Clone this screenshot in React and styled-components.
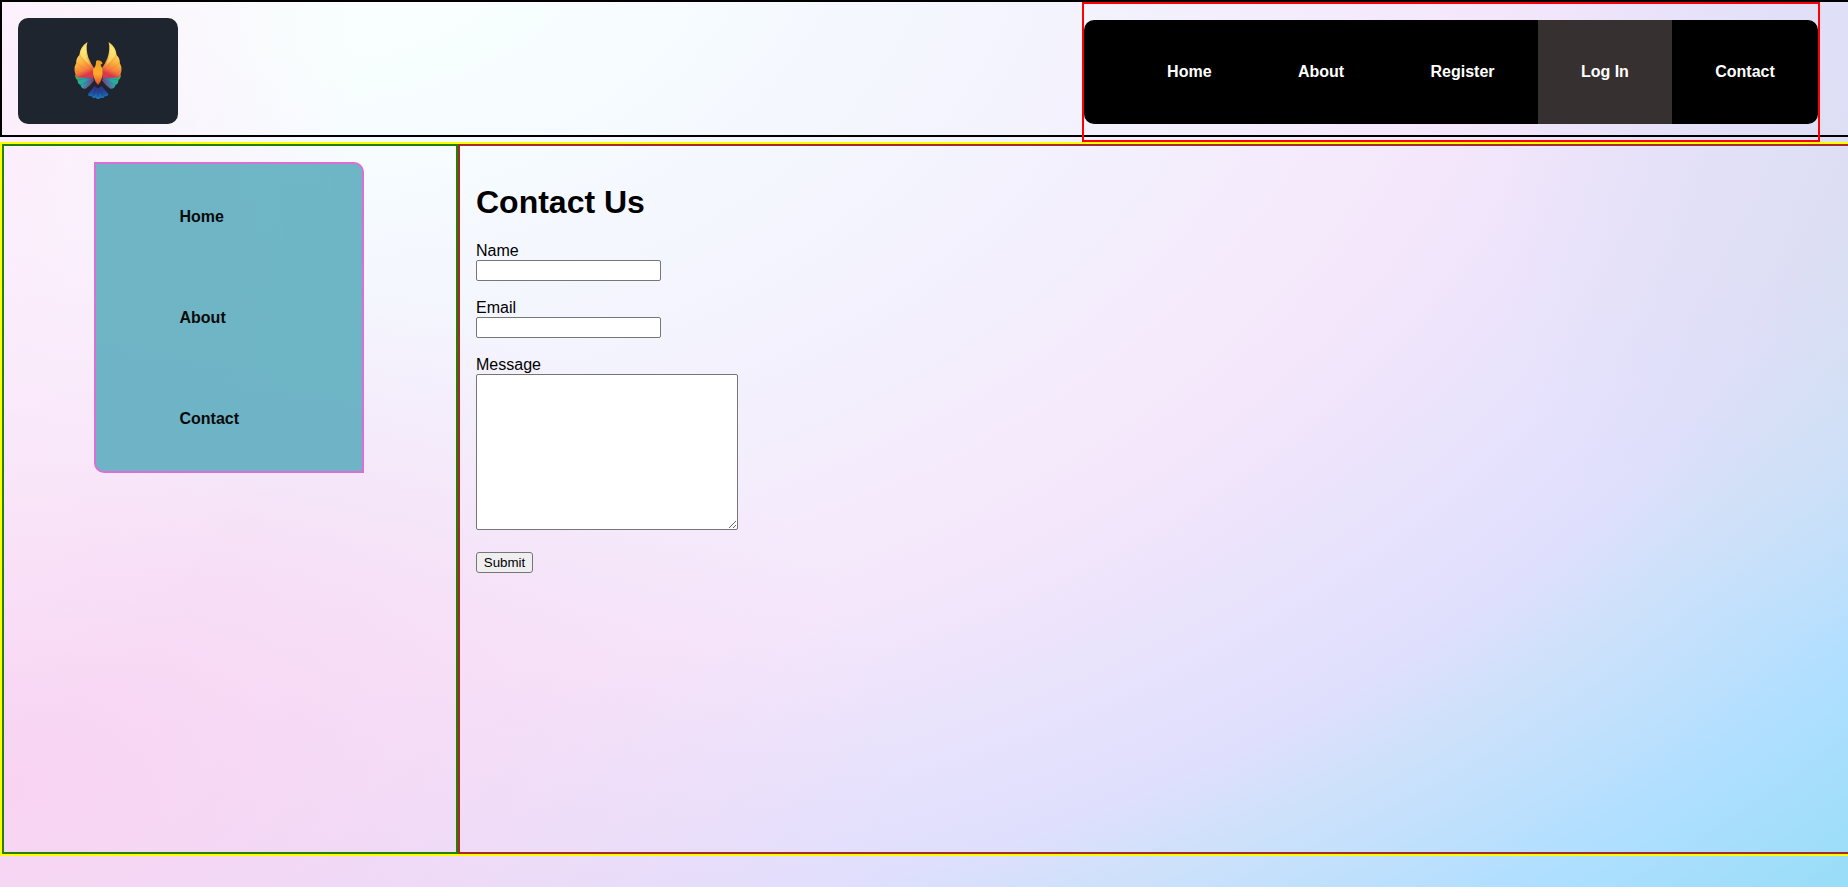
import React from "react";
import styled, { createGlobalStyle } from "styled-components";

const GlobalStyle = createGlobalStyle`
  html, body { height: 100%; }
  body {
    margin: 0;
    overflow: hidden;
    color: #000;
    font-family: "Liberation Sans", Arial, sans-serif;
    font-size: 16px;
    line-height: 18px;
    background:
      radial-gradient(ellipse 420px 600px at -60px 140px, rgba(255, 234, 251, 0.9), rgba(255, 236, 250, 0)),
      radial-gradient(ellipse 380px 420px at 1880px 230px, rgba(220, 222, 238, 0.7), rgba(222, 224, 242, 0)),
      radial-gradient(ellipse 900px 560px at 0px 790px, #f9d4f2, rgba(247, 222, 248, 0)),
      radial-gradient(ellipse 1300px 850px at 300px -100px,
        #f8fffe 0%, #f8fffe 18%, #f5faff 38%, #f3f1fd 66%, #f5e7fb 92%,
        #dfdffd 123%, #cfe1fa 131%, #b0dfff 149%, #97ddf7 167%);
    background-attachment: fixed;
  }
`;

const Header = styled.header`
  display: flex;
  justify-content: space-between;
  align-items: flex-start;
  width: 100%;
  height: 133px;
  border: 2px solid #000;
`;

const LogoLink = styled.a`
  display: flex;
  align-items: center;
  justify-content: center;
  width: 160px;
  height: 106px;
  margin: 16px;
  border-radius: 10px;
  background: #1e252e;
`;

const TopNav = styled.nav`
  box-sizing: border-box;
  width: 738px;
  margin-right: 30px;
  border: 2px solid red;
`;

const TopList = styled.ul`
  display: flex;
  justify-content: flex-end;
  margin: 16px 0;
  padding: 0;
  list-style: none;
  border-radius: 10px;
  background: #000;
  overflow: hidden;
`;

const TopLink = styled.a`
  display: block;
  padding: 43px 43.2px;
  color: #fff;
  font-weight: bold;
  text-decoration: none;
  background: ${(p) => (p.$active ? "#363130" : "transparent")};
`;

const Content = styled.div`
  display: flex;
  width: 100%;
  height: 710px;
  margin-top: 5px;
  border: 2px solid yellow;
`;

const Sidebar = styled.aside`
  box-sizing: border-box;
  flex: none;
  width: 456px;
  padding: 16px 90px;
  border: 2px solid #258000;
`;

const SideList = styled.ul`
  box-sizing: border-box;
  display: flex;
  flex-direction: column;
  gap: 83px;
  width: 270px;
  height: 311px;
  margin: 0;
  padding: 44px 83.5px 42px;
  list-style: none;
  border: 2px solid orchid;
  border-radius: 0 10px 0 10px;
  background: rgba(95, 174, 192, 0.9);
`;

const SideLink = styled.a`
  color: #060a0b;
  font-weight: bold;
  text-decoration: none;
`;

const Main = styled.main`
  flex: 1;
  padding: 16px;
  border: 2px solid brown;
`;

const Title = styled.h1`
  margin: 22px 0 21px;
  font-size: 32px;
  line-height: 37px;
`;

const Form = styled.form`
  display: flex;
  flex-direction: column;
  align-items: flex-start;
  gap: 18px;
`;

const Field = styled.label`
  display: flex;
  flex-direction: column;
`;

const fieldBox = `
  box-sizing: border-box;
  margin: 0;
  font-family: "Liberation Sans", Arial, sans-serif;
  font-size: 13.333px;
`;

const Input = styled.input`
  ${fieldBox}
  width: 185px;
  height: 21px;
  border: 1px solid #767676;
  border-radius: 2px;
`;

const TextArea = styled.textarea`
  ${fieldBox}
  width: 262px;
  height: 156px;
  border: 1px solid #767676;
  border-radius: 2px;
`;

const Submit = styled.button`
  ${fieldBox}
  width: 57px;
  height: 21px;
  margin-top: 4px;
  padding: 0;
  line-height: 15px;
  color: #000;
  border: 1px solid #767676;
  border-radius: 3px;
  background: #efefef;
`;

const LogoSvg = styled.svg`
  display: block;
  width: 54px;
  height: 64px;
  margin: 0 0 2px 2px;
`;

function Wing() {
  return (
    <g>
      <path d="M21 39.5 L3 37 Q3.4 41 5.5 42 Q5.5 46 8.5 47 Q9.5 51.5 14 50.5 Q18 48 22 42.5Z" fill="url(#tip)" />
      <path d="M5.5 42 L21 39.5 M8.5 47 L21.5 41" stroke="#176d91" strokeOpacity=".6" strokeWidth=".6" />
      <path d="M15.4 4 Q8 9 7.4 17 Q4 20 4.2 25 Q1.8 29 2.6 33 Q3.2 37.5 5.5 39.5 L21.5 40 L22 30 Q19 26 16.5 20 Q13.5 11 15.4 4Z" fill="url(#feather)" />
      <path d="M7.6 17 Q13 26 21 33 M4.6 25 Q12 31 21 36 M2.8 33 Q12 36 21 38" stroke="#e0602c" strokeOpacity=".35" strokeWidth=".7" fill="none" />
      <path d="M14 7 Q8.5 12 9 18 Q13 23 18 27 Q12.5 17 14 7Z" fill="#fff08a" fillOpacity=".5" />
    </g>
  );
}

function Logo() {
  return (
    <LogoSvg viewBox="0 0 54 64" aria-label="Phoenix">
      <defs>
        <linearGradient id="feather" x1="0" y1="0" x2=".25" y2="1">
          <stop offset="0" stopColor="#f7c64b" />
          <stop offset=".3" stopColor="#fbe06a" />
          <stop offset=".62" stopColor="#fbb43e" />
          <stop offset=".86" stopColor="#f47c3a" />
          <stop offset="1" stopColor="#d9344d" />
        </linearGradient>
        <linearGradient id="tip" x1="0" y1=".2" x2="1" y2=".5">
          <stop offset="0" stopColor="#35b957" />
          <stop offset=".5" stopColor="#2aa5ae" />
          <stop offset="1" stopColor="#83347e" />
        </linearGradient>
        <linearGradient id="torso" x1="0" y1="0" x2="0" y2="1">
          <stop offset="0" stopColor="#f0a01f" />
          <stop offset=".55" stopColor="#fbac2c" />
          <stop offset="1" stopColor="#ee4527" />
        </linearGradient>
        <linearGradient id="tail" x1="0" y1="0" x2="0" y2="1">
          <stop offset="0" stopColor="#3b2a80" />
          <stop offset=".5" stopColor="#214b9f" />
          <stop offset="1" stopColor="#1a82c5" />
        </linearGradient>
      </defs>
      <Wing />
      <g transform="translate(52 0) scale(-1 1)">
        <Wing />
      </g>
      <path d="M22.5 48 L26 50.5 L29.5 48 L36.5 56 Q36 59 33 58 Q31.5 61 29 59.5 Q26 62.5 23.5 59.5 Q20.5 61 19.5 58 Q16 59 16 56Z" fill="url(#tail)" />
      <path d="M24 51 L21 58 M26 52 V59 M28 51 L31 58" stroke="#172b67" strokeOpacity=".7" strokeWidth=".6" />
      <path d="M24 24 Q24 21.5 27 22.5 Q30 22.5 30.5 26 L28.5 26.5 Q29.5 29 30.5 31 Q31.5 41 26 47 Q20.5 41 21 31 Q24 29 24 24Z" fill="url(#torso)" />
    </LogoSvg>
  );
}

const topLinks = ["Home", "About", "Register", "Log In", "Contact"];
const sideLinks = ["Home", "About", "Contact"];

export default function App() {
  return (
    <>
      <GlobalStyle />
      <Header>
        <LogoLink>
          <Logo />
        </LogoLink>
        <TopNav>
          <TopList>
            {topLinks.map((label) => (
              <li key={label}>
                <TopLink $active={label === "Log In"}>{label}</TopLink>
              </li>
            ))}
          </TopList>
        </TopNav>
      </Header>
      <Content>
        <Sidebar>
          <SideList>
            {sideLinks.map((label) => (
              <li key={label}>
                <SideLink>{label}</SideLink>
              </li>
            ))}
          </SideList>
        </Sidebar>
        <Main>
          <Title>Contact Us</Title>
          <Form onSubmit={(e) => e.preventDefault()}>
            <Field>
              Name
              <Input type="text" />
            </Field>
            <Field>
              Email
              <Input type="email" />
            </Field>
            <Field>
              Message
              <TextArea />
            </Field>
            <Submit type="submit">Submit</Submit>
          </Form>
        </Main>
      </Content>
    </>
  );
}
